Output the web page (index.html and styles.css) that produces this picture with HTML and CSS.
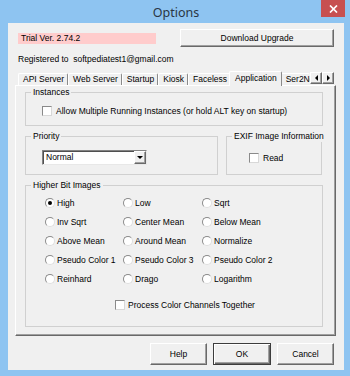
FILE: index.html
```html
<!DOCTYPE html>
<html>
<head>
<meta charset="utf-8">
<link rel="stylesheet" href="styles.css">
</head>
<body>
<div class="window">
  <div class="titlebar">
    <span class="title">Options</span>
    <div class="close"><svg width="9" height="8" viewBox="0 0 9 8"><path d="M1 0.5 L8 7.5 M8 0.5 L1 7.5" stroke="#fff" stroke-width="1.7"/></svg></div>
  </div>
  <div class="client">
    <div class="toprow">
      <div class="trial">Trial Ver. 2.74.2</div>
      <button class="btn dl">Download Upgrade</button>
    </div>
    <div class="reg">Registered to&nbsp; softpediatest1@gmail.com</div>
    <div class="tabs">
      <div class="tab">API Server</div>
      <div class="tab">Web Server</div>
      <div class="tab">Startup</div>
      <div class="tab">Kiosk</div>
      <div class="tab">Faceless</div>
      <div class="tab active">Application</div>
      <div class="tab clipped">Ser2Ne</div>
      <div class="scroll">
        <div class="sbtn"><span class="tri-l"></span></div>
        <div class="sbtn"><span class="tri-r"></span></div>
      </div>
    </div>
    <div class="panel">
      <fieldset class="group inst">
        <legend>Instances</legend>
        <div class="inst-body">
          <label class="check"><span class="cbox"></span><span>Allow Multiple Running Instances (or hold ALT key on startup)</span></label>
        </div>
      </fieldset>
      <div class="row2">
        <fieldset class="group prio">
          <legend>Priority</legend>
          <div class="prio-body">
            <div class="select"><span class="sel-text">Normal</span><span class="sel-btn"><span class="tri-d"></span></span></div>
          </div>
        </fieldset>
        <fieldset class="group exif">
          <legend>EXIF Image Information</legend>
          <div class="exif-body">
            <label class="check"><span class="cbox"></span><span>Read</span></label>
          </div>
        </fieldset>
      </div>
      <fieldset class="group hbi">
        <legend>Higher Bit Images</legend>
        <div class="hbi-body">
          <div class="radios">
            <label class="radio"><span class="rdot checked"></span><span>High</span></label>
            <label class="radio"><span class="rdot"></span><span>Low</span></label>
            <label class="radio"><span class="rdot"></span><span>Sqrt</span></label>
            <label class="radio"><span class="rdot"></span><span>Inv Sqrt</span></label>
            <label class="radio"><span class="rdot"></span><span>Center Mean</span></label>
            <label class="radio"><span class="rdot"></span><span>Below Mean</span></label>
            <label class="radio"><span class="rdot"></span><span>Above Mean</span></label>
            <label class="radio"><span class="rdot"></span><span>Around Mean</span></label>
            <label class="radio"><span class="rdot"></span><span>Normalize</span></label>
            <label class="radio"><span class="rdot"></span><span>Pseudo Color 1</span></label>
            <label class="radio"><span class="rdot"></span><span>Pseudo Color 3</span></label>
            <label class="radio"><span class="rdot"></span><span>Pseudo Color 2</span></label>
            <label class="radio"><span class="rdot"></span><span>Reinhard</span></label>
            <label class="radio"><span class="rdot"></span><span>Drago</span></label>
            <label class="radio"><span class="rdot"></span><span>Logarithm</span></label>
          </div>
          <label class="check process"><span class="cbox"></span><span>Process Color Channels Together</span></label>
        </div>
      </fieldset>
    </div>
    <div class="buttons">
      <button class="btn bb">Help</button>
      <button class="btn bb ok">OK</button>
      <button class="btn bb">Cancel</button>
    </div>
  </div>
</div>
</body>
</html>
```

FILE: styles.css
```css
* { box-sizing: border-box; }
html, body { margin: 0; padding: 0; }
body {
  width: 350px;
  height: 376px;
  overflow: hidden;
  font-family: "Liberation Sans", Arial, sans-serif;
  font-size: 8.5px;
  color: #000;
}
.window {
  width: 350px;
  height: 376px;
  background: #8ec4f1;
  display: flex;
  flex-direction: column;
  padding: 0 6px 6px 8px;
}
.titlebar {
  height: 23px;
  flex: none;
  position: relative;
  display: flex;
  align-items: center;
  justify-content: center;
}
.title {
  font-family: "Noto Sans", "Open Sans", sans-serif;
  font-size: 12.5px;
  color: #2a3644;
  margin-top: 1px;
}
.close {
  position: absolute;
  top: 0;
  right: -1px;
  width: 24px;
  height: 17px;
  background: #c75050;
  display: flex;
  align-items: center;
  justify-content: center;
}
.client {
  flex: 1;
  background: #f0f0f0;
  display: flex;
  flex-direction: column;
  padding-bottom: 5px;
}
.toprow {
  display: flex;
  align-items: center;
  gap: 24px;
  margin: 6px 10px 0 10px;
}
.trial {
  width: 138px;
  height: 11px;
  line-height: 11px;
  background: #ffcccc;
  padding-left: 3px;
}
.btn {
  font: inherit;
  color: #000;
  background: #f0f0f0;
  border: 1px solid;
  border-color: #ffffff #696969 #696969 #ffffff;
  box-shadow: inset -1px -1px #a0a0a0;
  padding: 0;
  margin: 0;
}
.dl { flex: 1; height: 18px; }
.reg {
  margin: 6px 0 0 10px;
  line-height: 12px;
}
.tabs {
  display: flex;
  align-items: flex-end;
  height: 14px;
  margin: 6px 10px 0 10px;
  position: relative;
  z-index: 1;
}
.tab {
  height: 12px;
  line-height: 11px;
  padding: 0 3px 0 4px;
  border: 1px solid;
  border-bottom: none;
  border-color: #ffffff #8a8a8a #ffffff #ffffff;
  border-radius: 2px 2px 0 0;
  white-space: nowrap;
  flex: none;
}
.tab.active {
  height: 15px;
  line-height: 12px;
  margin: 0 -2px -1px -2px;
  padding: 0 4px 0 5px;
  background: #f0f0f0;
  position: relative;
}
.tab.clipped {
  flex: 1;
  min-width: 0;
  overflow: hidden;
  border-right: none;
  padding-left: 5px;
}
.scroll {
  display: flex;
  flex: none;
  margin-bottom: 1px;
}
.sbtn {
  width: 12px;
  height: 12px;
  background: #f0f0f0;
  border: 1px solid;
  border-color: #ffffff #696969 #696969 #ffffff;
  box-shadow: inset -1px -1px #a0a0a0;
  display: flex;
  align-items: center;
  justify-content: center;
}
.tri-l {
  width: 0; height: 0;
  border-top: 3px solid transparent;
  border-bottom: 3px solid transparent;
  border-right: 3px solid #000;
}
.tri-r {
  width: 0; height: 0;
  border-top: 3px solid transparent;
  border-bottom: 3px solid transparent;
  border-left: 3px solid #000;
}
.panel {
  flex: 1;
  margin: 0 8px 0 7px;
  border: 1px solid;
  border-color: #ffffff #696969 #696969 #ffffff;
  box-shadow: inset -1px -1px #a0a0a0;
  padding: 1px 12px 0 9px;
  display: flex;
  flex-direction: column;
}
.group {
  border: 1px solid #d0d0d0;
  margin: 0;
  padding: 0;
  min-width: 0;
}
legend {
  padding: 0 2px;
  margin-left: 5px;
  line-height: 11px;
  white-space: nowrap;
}
.check {
  display: flex;
  align-items: center;
  gap: 4px;
  line-height: 12px;
}
.cbox {
  width: 10px;
  height: 10px;
  flex: none;
  background: #fff;
  border: 1px solid;
  border-color: #8a8a8a #d8d8d8 #d8d8d8 #8a8a8a;
}
.inst-body { padding: 7px 0 8px 16px; }
.row2 {
  display: flex;
  gap: 8px;
  margin-top: 5px;
}
.prio { width: 193px; flex: none; }
.exif { flex: 1; margin-right: 1px; }
.prio-body { padding: 8px 0 9px 16px; }
.exif-body { padding: 10px 0 9px 22px; }
.select {
  width: 105px;
  height: 15px;
  display: flex;
  background: #fff;
  border: 1px solid;
  border-color: #828282 #e8e8e8 #e8e8e8 #828282;
  box-shadow: inset 1px 1px #505050;
}
.sel-text {
  flex: 1;
  line-height: 13px;
  padding-left: 3px;
}
.sel-btn {
  width: 12px;
  height: 13px;
  background: #f0f0f0;
  border: 1px solid;
  border-color: #ffffff #696969 #696969 #ffffff;
  box-shadow: inset -1px -1px #a0a0a0;
  display: flex;
  align-items: center;
  justify-content: center;
}
.tri-d {
  width: 0; height: 0;
  border-left: 3px solid transparent;
  border-right: 3px solid transparent;
  border-top: 3px solid #000;
}
.hbi { margin-top: 5px; }
.hbi-body { padding: 2px 0 15px 19px; }
.radios {
  display: grid;
  grid-template-columns: 78px 79px auto;
  grid-auto-rows: 19px;
}
.radio {
  display: flex;
  align-items: center;
  gap: 2px;
}
.rdot {
  width: 10px;
  height: 10px;
  flex: none;
  border-radius: 50%;
  background: #fff;
  border: 1px solid;
  border-color: #8a8a8a #dedede #dedede #8a8a8a;
  display: flex;
  align-items: center;
  justify-content: center;
}
.rdot.checked::after {
  content: "";
  width: 4px;
  height: 4px;
  border-radius: 50%;
  background: #000;
}
.process {
  margin: 11px 0 0 70px;
  gap: 3px;
}
.buttons {
  display: flex;
  justify-content: flex-end;
  gap: 6px;
  margin: 7px 10px 0 0;
}
.bb {
  width: 57px;
  height: 22px;
}
.bb.ok {
  width: 58px;
  border: 1px solid #3c3c3c;
  box-shadow: inset 1px 1px #ffffff, inset -1px -1px #696969, inset -2px -2px #a0a0a0;
}
```
